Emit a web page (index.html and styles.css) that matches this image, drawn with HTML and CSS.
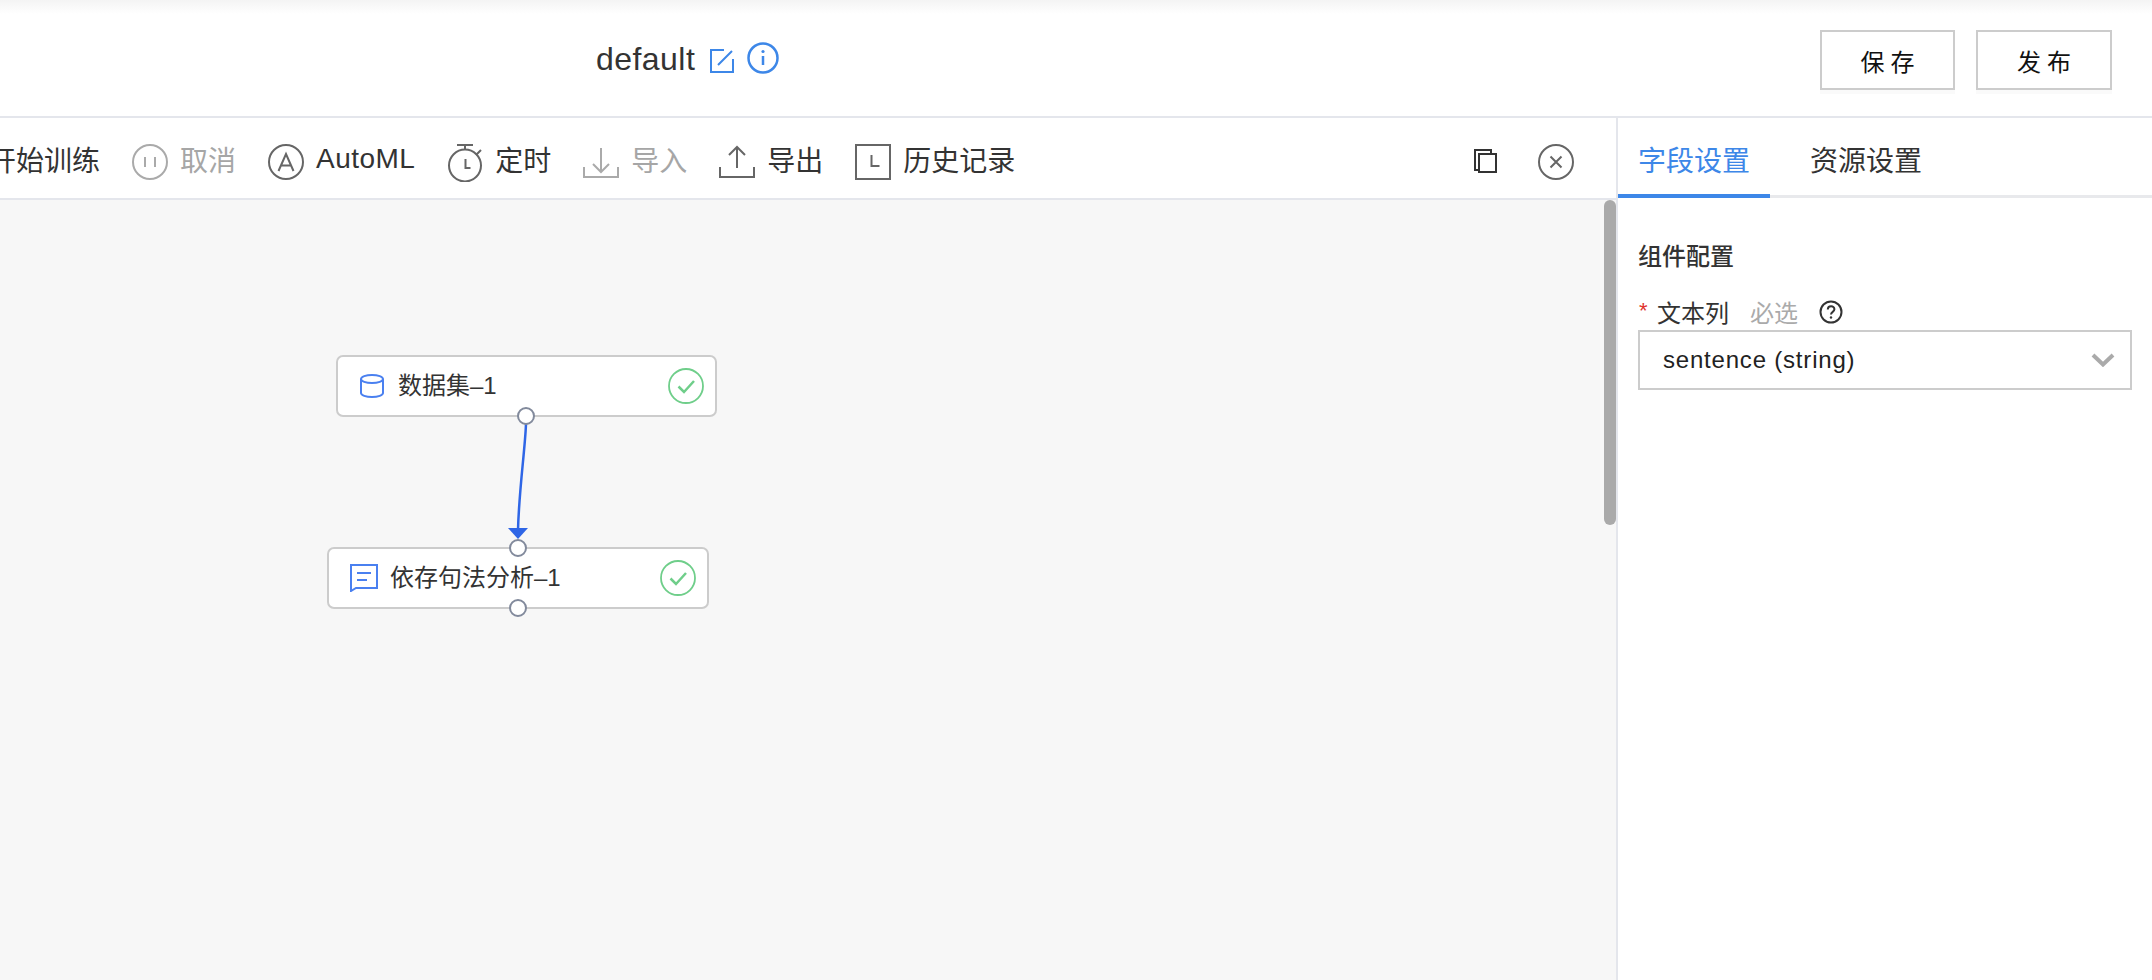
FILE: index.html
```html
<!DOCTYPE html>
<html lang="zh">
<head>
<meta charset="utf-8">
<title>default</title>
<link rel="stylesheet" href="styles.css">
</head>
<body>
<div class="app">
  <header class="header">
    <div class="title">
      <span class="title-text">default</span>
      <svg class="icon-edit" viewBox="0 0 24 24"><path d="M14 1H1v22h22V10M8 16 22 2"/></svg>
      <svg class="icon-info" viewBox="0 0 32 32"><circle cx="16" cy="16" r="14.500"/><path d="M16 14v9"/><circle class="dot" cx="16" cy="9.500" r="1.600"/></svg>
    </div>
    <div class="actions">
      <button class="btn">保存</button>
      <button class="btn">发布</button>
    </div>
  </header>
  <div class="main">
    <section class="work">
      <nav class="toolbar">
        <div class="tool first"><span>开始训练</span></div>
        <div class="tool off">
          <svg class="ic" viewBox="0 0 36 36"><circle cx="18" cy="18" r="17"/><path d="M13 13v10M23 13v10"/></svg>
          <span>取消</span>
        </div>
        <div class="tool">
          <svg class="ic" viewBox="0 0 36 36"><circle cx="18" cy="18" r="17"/><path d="m10.500 27 7.500-17 7.500 17M13 21.500h10"/></svg>
          <span class="latin">AutoML</span>
        </div>
        <div class="tool">
          <svg class="ic tall" viewBox="0 0 36 38"><circle cx="17" cy="21.500" r="16"/><path d="M9 1h16M17 1v5M28 11l5-5M17.500 15v9h5"/></svg>
          <span>定时</span>
        </div>
        <div class="tool off">
          <svg class="ic" viewBox="0 0 36 36"><path d="M1 23v10h34V23M18 4v24M10 20l8 8 8-8"/></svg>
          <span>导入</span>
        </div>
        <div class="tool">
          <svg class="ic" viewBox="0 0 36 36"><path d="M1 23v10h34V23M18 24V3M10 11l8-8 8 8"/></svg>
          <span>导出</span>
        </div>
        <div class="tool">
          <svg class="ic" viewBox="0 0 36 36"><rect x="1" y="1" width="34" height="34"/><path d="M16.500 11v11h8"/></svg>
          <span>历史记录</span>
        </div>
        <div class="tool-right">
          <svg class="icon-copy" viewBox="0 0 25 24"><path d="M6 21H2V1h16v4"/><rect x="6" y="5" width="17" height="18"/></svg>
          <svg class="ic" viewBox="0 0 36 36"><circle cx="18" cy="18" r="17"/><path d="m12.500 12.500 11 11M23.500 12.500l-11 11"/></svg>
        </div>
      </nav>
      <div class="canvas">
        <svg class="edge" viewBox="0 0 1604 780">
          <path d="M526 224C525 250 519 290 518 330"/>
          <polygon points="508,328 528,328 518,339"/>
        </svg>
        <div class="node node-a">
          <svg class="node-ic" viewBox="0 0 24 24"><ellipse cx="12" cy="5" rx="11" ry="4"/><path d="M1 5v14c0 2.200 5 4 11 4s11-1.800 11-4V5"/></svg>
          <span class="node-label">数据集–1</span>
          <svg class="check" viewBox="0 0 36 36"><circle cx="18" cy="18" r="17"/><path d="m10.500 18.500 5.500 5.500 10-11"/></svg>
          <i class="port port-bottom"></i>
        </div>
        <div class="node node-b">
          <svg class="node-ic wide" viewBox="0 0 28 28"><path d="M1 27V1h26v23H6zM7 9h14M7 16h10"/></svg>
          <span class="node-label">依存句法分析–1</span>
          <svg class="check" viewBox="0 0 36 36"><circle cx="18" cy="18" r="17"/><path d="m10.500 18.500 5.500 5.500 10-11"/></svg>
          <i class="port port-top"></i>
          <i class="port port-bottom"></i>
        </div>
        <div class="scroll-thumb"></div>
      </div>
    </section>
    <aside class="panel">
      <div class="tabs">
        <div class="tab active">字段设置</div>
        <div class="tab">资源设置</div>
      </div>
      <div class="panel-body">
        <h3 class="panel-title">组件配置</h3>
        <div class="field-label">
          <span class="req">*</span>
          <span class="name">文本列</span>
          <span class="hint">必选</span>
          <svg class="help" viewBox="0 0 24 24"><circle cx="12" cy="12" r="10.500"/><path d="M8.800 9.500c0-4.300 6.600-4.300 6.600-.2 0 2.700-3.400 2.500-3.400 5.200"/><circle class="dot" cx="12" cy="17.500" r="1.200"/></svg>
        </div>
        <div class="select">
          <span>sentence (string)</span>
          <svg class="chev" viewBox="0 0 24 14"><path d="m2 2 10 9.500L22 2"/></svg>
        </div>
      </div>
    </aside>
  </div>
</div>
</body>
</html>
```
FILE: styles.css
```css
* { box-sizing: border-box; }
html, body { margin: 0; height: 100%; overflow: hidden; background: #fff; }
body { font-family: "Liberation Sans", "Noto Sans CJK SC", sans-serif; color: #333; }
svg { display: block; flex: none; fill: none; }

.app { display: flex; flex-direction: column; width: 2152px; height: 980px; }

.header {
  height: 118px; flex: none; display: flex; align-items: flex-start;
  padding: 30px 40px 0 596px;
  border-bottom: 2px solid #e4e6ec;
  background: linear-gradient(#f4f4f4, #fff 14px);
}
.title { display: flex; align-items: center; height: 58px; margin-top: -1px; }
.title-text { font-size: 32px; line-height: 58px; color: #333; letter-spacing: .45px; padding-top: 2px; }
.icon-edit { width: 24px; height: 24px; margin-left: 15px; margin-top: 5px; stroke: #3d87e8; stroke-width: 2; }
.icon-info { width: 32px; height: 32px; margin-left: 13px; margin-top: -1px; stroke: #3d87e8; stroke-width: 2.500; }
.dot { fill: #3d87e8; stroke: none; }
.help .dot { fill: #333; }

.actions { margin-left: auto; display: flex; gap: 21px; }
.btn {
  width: 136px; height: 60px; background: #fff; border: 2px solid #ccc; border-radius: 0;
  font: 24px "Liberation Sans", "Noto Sans CJK SC", sans-serif; letter-spacing: 6px; color: #111; padding: 0 0 0 6px;
  box-shadow: 0 4px 0 #fafafa;
}
.btn:first-child { width: 135px; }

.main { flex: 1; display: flex; min-height: 0; }
.work { width: 1616px; flex: none; display: flex; flex-direction: column; min-width: 0; }

.toolbar {
  height: 82px; flex: none; display: flex; align-items: center; gap: 32px;
  border-bottom: 2px solid #e4e6ec; font-size: 28px; color: #333;
  padding: 8px 42px 0 0; overflow: hidden;
}
.tool { display: flex; align-items: center; gap: 12px; white-space: nowrap; flex: none; }
.tool span { padding-bottom: 6px; }
.tool .latin { letter-spacing: .45px; }
.tool.first { margin-left: -12px; }
.tool.off { color: #a6a6a6; }
.ic { width: 36px; height: 36px; stroke: #666; stroke-width: 2; }
.ic.tall { height: 38px; margin-top: 2px; margin-left: 1px; margin-right: -1px; }
.off .ic { stroke: #aaa; }
.tool-right { margin-left: auto; display: flex; align-items: center; gap: 40px; }
.icon-copy { width: 25px; height: 24px; margin-bottom: 2px; stroke: #333; stroke-width: 2; }

.canvas { flex: 1; position: relative; background: #f7f7f7; }
.edge { position: absolute; left: 0; top: 0; width: 1604px; height: 780px; }
.edge path { stroke: #2f66e6; stroke-width: 2.500; }
.edge polygon { fill: #2f66e6; }

.node {
  position: absolute; height: 62px; width: 382px; display: flex; align-items: center;
  background: #fff; border: 2px solid #ccc; border-radius: 7px;
}
.node-a { left: 336px; top: 155px; width: 381px; padding-left: 22px; }
.node-b { left: 327px; top: 347px; padding-left: 21px; }
.node-ic { width: 24px; height: 24px; stroke: #4a80f0; stroke-width: 2; }
.node-ic.wide { width: 28px; height: 28px; }
.node-label { margin-left: 14px; font-size: 24px; color: #333; margin-bottom: 6px; white-space: nowrap; }
.node-b .node-label { margin-left: 12px; }
.check { margin-left: auto; margin-right: 11px; width: 36px; height: 36px; stroke: #6fce8a; stroke-width: 1.800; }
.check path { stroke-width: 2.500; }
.port {
  position: absolute; left: 180px; width: 18px; height: 18px; border-radius: 50%;
  background: #fff; border: 2px solid #828a9c;
}
.node-a .port { left: 179px; }
.port-bottom { bottom: -10px; }
.port-top { top: -10px; }

.scroll-thumb {
  position: absolute; left: 1604px; top: 0; width: 12px; height: 325px;
  background: #aaa; border-radius: 6px;
}

.panel { flex: 1; border-left: 2px solid #e4e6ec; min-width: 0; }
.tabs { display: flex; height: 80px; border-bottom: 3px solid #e8e9ec; }
.tab {
  width: 152px; height: 80px; display: flex; align-items: center; justify-content: center;
  font-size: 28px; color: #333; margin-right: 20px; padding-top: 5px;
  border-bottom: 4px solid transparent;
}
.tab.active { color: #3d87e8; border-bottom-color: #3d87e8; }
.panel-body { padding: 0 20px; }
.panel-title { margin: 0; padding-top: 42px; height: 76px; line-height: 34px; font-size: 24px; font-weight: 500; color: #333; }
.field-label { display: flex; align-items: center; margin-top: 21px; height: 32px; font-size: 24px; }
.req { color: #e0332e; width: 19px; padding-left: 1px; font-size: 22px; }
.hint { color: #aaa; margin-left: 21px; }
.help { width: 24px; height: 24px; margin-left: 21px; margin-top: 2px; stroke: #333; stroke-width: 2; }
.select {
  height: 60px; margin-top: 3px; display: flex; align-items: center; justify-content: space-between;
  border: 2px solid #ccc; padding: 0 15px 0 23px; font-size: 24px; letter-spacing: .8px; color: #222;
}
.chev { width: 24px; height: 14px; stroke: #aaa; stroke-width: 4; }
```
